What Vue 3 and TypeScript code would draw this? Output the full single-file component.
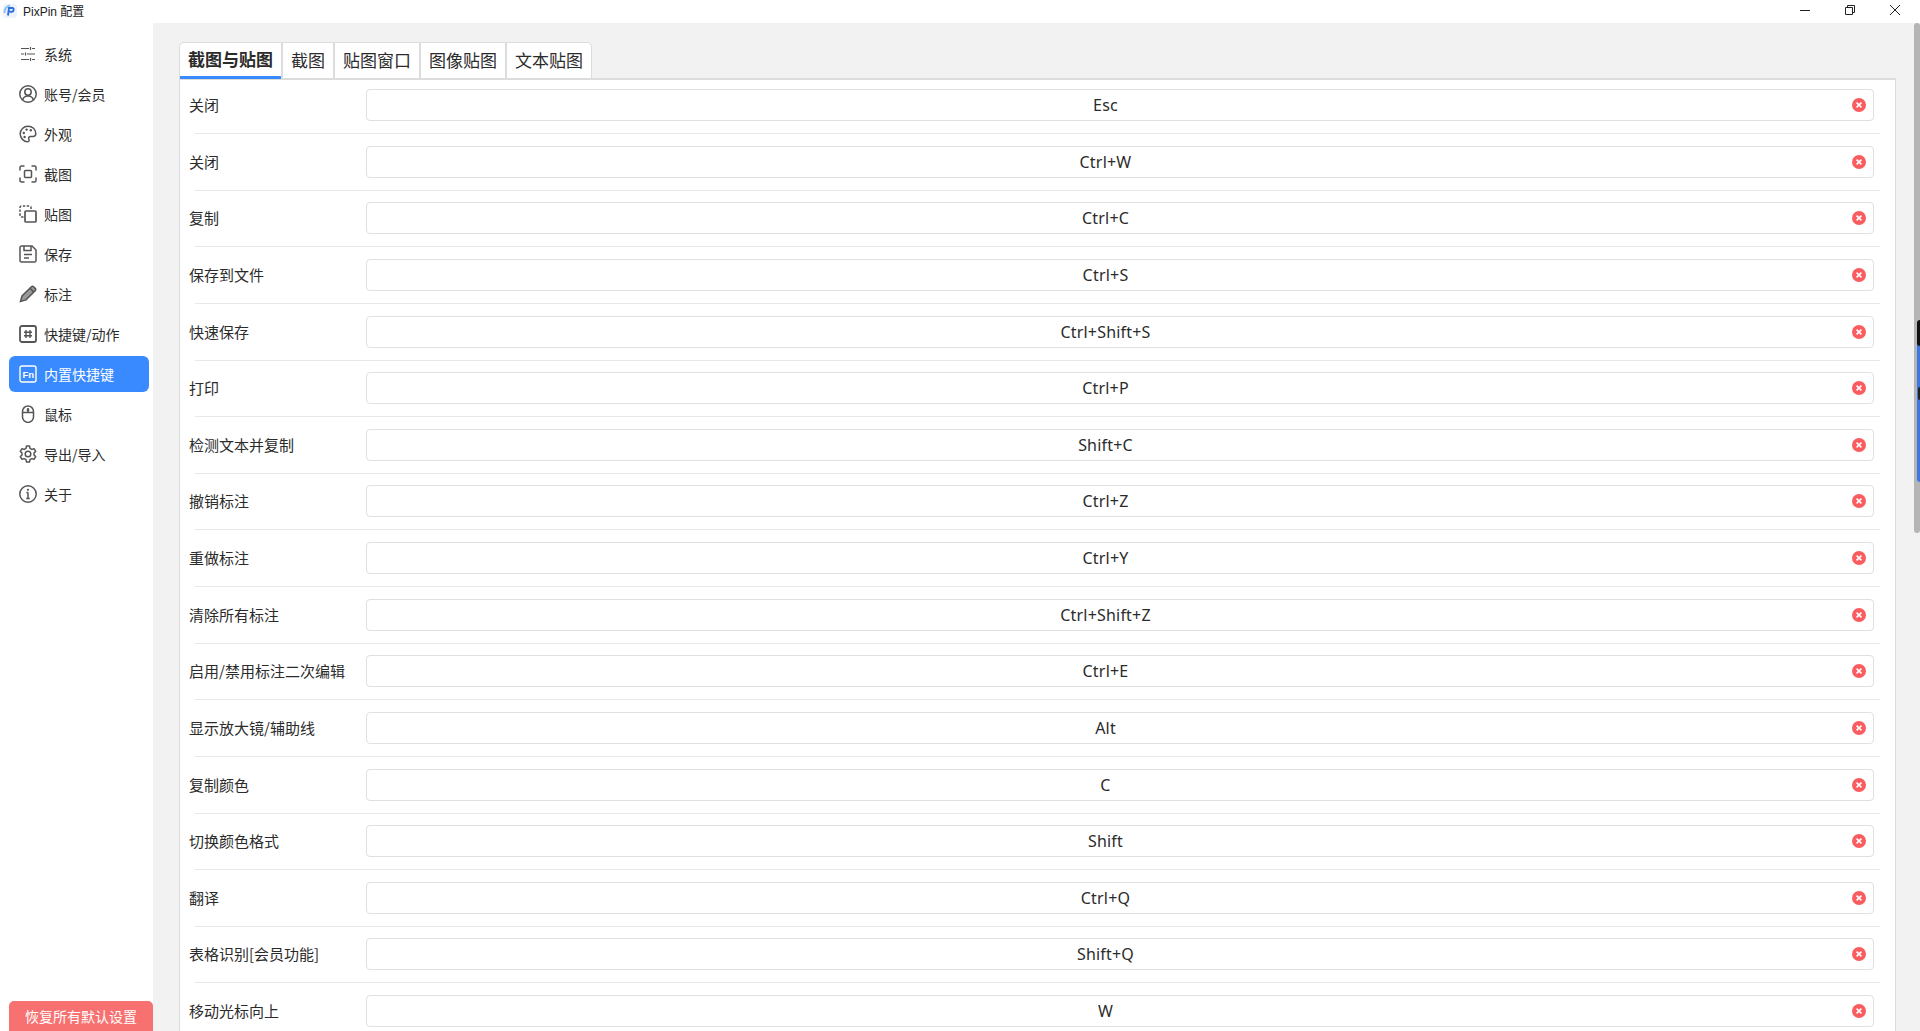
<script setup lang="ts">
interface NavItem { label: string; icon: string; active?: boolean }
const nav: NavItem[] = [
  { label: '系统', icon: 'sliders' },
  { label: '账号/会员', icon: 'user' },
  { label: '外观', icon: 'palette' },
  { label: '截图', icon: 'shot' },
  { label: '贴图', icon: 'pin' },
  { label: '保存', icon: 'save' },
  { label: '标注', icon: 'pen' },
  { label: '快捷键/动作', icon: 'hash' },
  { label: '内置快捷键', icon: 'fn', active: true },
  { label: '鼠标', icon: 'mouse' },
  { label: '导出/导入', icon: 'gear' },
  { label: '关于', icon: 'info' },
]
const tabs = ['截图与贴图', '截图', '贴图窗口', '图像贴图', '文本贴图']
const rows: [string, string][] = [
  ['关闭', 'Esc'],
  ['关闭', 'Ctrl+W'],
  ['复制', 'Ctrl+C'],
  ['保存到文件', 'Ctrl+S'],
  ['快速保存', 'Ctrl+Shift+S'],
  ['打印', 'Ctrl+P'],
  ['检测文本并复制', 'Shift+C'],
  ['撤销标注', 'Ctrl+Z'],
  ['重做标注', 'Ctrl+Y'],
  ['清除所有标注', 'Ctrl+Shift+Z'],
  ['启用/禁用标注二次编辑', 'Ctrl+E'],
  ['显示放大镜/辅助线', 'Alt'],
  ['复制颜色', 'C'],
  ['切换颜色格式', 'Shift'],
  ['翻译', 'Ctrl+Q'],
  ['表格识别[会员功能]', 'Shift+Q'],
  ['移动光标向上', 'W'],
]
</script>

<template>
  <div class="win">
    <header class="titlebar">
      <div class="title-left">
        <svg class="logo" width="16" height="16" viewBox="0 0 16 16">
          <rect x="1" y="1" width="14" height="14" rx="3" fill="#eef3fb" />
          <path d="M2.5 10 A7 7 0 0 1 8 2.5" fill="none" stroke="#8fc0f5" stroke-width="2" />
          <path d="M6 12.5L7 5H10.5C12 5 12.3 8.6 10 8.8H7.6" fill="none" stroke="#2a6fe0" stroke-width="1.9" />
        </svg>
        <span class="title-text">PixPin 配置</span>
      </div>
      <div class="win-controls">
        <svg width="12" height="12" viewBox="0 0 12 12"><path d="M1 6.5H11" stroke="#222" fill="none" /></svg>
        <svg width="12" height="12" viewBox="0 0 12 12"><path d="M1.5 3.5H8.5V10.5H1.5ZM3.5 3.5V1.5H10.5V8.5H8.5" stroke="#222" fill="none" /></svg>
        <svg width="12" height="12" viewBox="0 0 12 12"><path d="M1 1L11 11M11 1L1 11" stroke="#222" fill="none" /></svg>
      </div>
    </header>
    <div class="body">
      <aside class="side">
        <nav class="nav">
          <div v-for="n in nav" :key="n.label" class="nav-item" :class="{ active: n.active }">
            <svg class="nav-icon" width="18" height="18" viewBox="0 0 18 18" fill="none" stroke="currentColor" stroke-width="1.5">
              <template v-if="n.icon === 'sliders'">
                <path stroke-width="1.2" d="M2 3.5H10M13 3.5H16M2 9H5M8 9H16M2 14.5H10M13 14.5H16M11.5 2V5M6.5 7.5V10.5M11.5 13V16" />
              </template>
              <template v-else-if="n.icon === 'user'">
                <circle cx="9" cy="9" r="8.2" />
                <circle cx="9" cy="7" r="3.2" />
                <path d="M3.6 15C4.4 12 6.6 11 9 11S13.6 12 14.4 15" />
              </template>
              <template v-else-if="n.icon === 'palette'">
                <path d="M9 1.2C4.6 1.2 1.2 4.6 1.2 8.8S4.6 16.8 8.6 16.8C10.4 16.8 10.4 15.2 9.8 14.2 9.2 13 10 11.6 11.4 11.6H14C15.8 11.6 16.8 10.4 16.8 8.6 16.8 4.4 13.4 1.2 9 1.2Z" />
                <circle cx="4.8" cy="8" r="1.2" fill="currentColor" stroke="none" />
                <circle cx="7.6" cy="4.6" r="1.2" fill="currentColor" stroke="none" />
                <circle cx="11.8" cy="5.2" r="1.2" fill="currentColor" stroke="none" />
                <circle cx="5.6" cy="12" r="1.2" fill="currentColor" stroke="none" />
              </template>
              <template v-else-if="n.icon === 'shot'">
                <path d="M1 5.5V2.5C1 1.6 1.6 1 2.5 1H5.5M12.5 1H15.5C16.4 1 17 1.6 17 2.5V5.5M17 12.5V15.5C17 16.4 16.4 17 15.5 17H12.5M5.5 17H2.5C1.6 17 1 16.4 1 15.5V12.5" />
                <rect x="5.5" y="5.5" width="7" height="7" rx="1" />
              </template>
              <template v-else-if="n.icon === 'pin'">
                <path d="M4.5 12H2.5C1.6 12 1 11.4 1 10.5V2.5C1 1.6 1.6 1 2.5 1H10.5C11.4 1 12 1.6 12 2.5V4.5" stroke-dasharray="2.4 1.5" />
                <rect x="6" y="6" width="11" height="11" rx="1" stroke-width="1.7" />
              </template>
              <template v-else-if="n.icon === 'save'">
                <path d="M2.5 1H13L17 5V15.5C17 16.4 16.4 17 15.5 17H2.5C1.6 17 1 16.4 1 15.5V2.5C1 1.6 1.6 1 2.5 1Z" />
                <path d="M5 1V5.5H12V1M5 9.5H13M5 13H10" />
              </template>
              <template v-else-if="n.icon === 'pen'">
                <path d="M1.5 16.5L3 11 12.4 1.8C13 1.2 14 1.2 14.6 1.8L16.2 3.4C16.8 4 16.8 5 16.2 5.6L7 14.9Z" fill="currentColor" fill-opacity=".6" />
                <path d="M11 3.3L14.7 7" />
              </template>
              <template v-else-if="n.icon === 'hash'">
                <rect x="1" y="1" width="16" height="16" rx="2" stroke-width="1.8" />
                <path stroke-width="1.4" d="M7 5V13M11 5V13M5 7.3H13M5 10.7H13" />
              </template>
              <template v-else-if="n.icon === 'fn'">
                <rect x="1" y="1" width="16" height="16" rx="2" stroke-width="1.4" />
                <text x="3.4" y="12.6" font-size="9.5" font-weight="700" fill="currentColor" stroke="none" font-family="Liberation Sans">Fn</text>
              </template>
              <template v-else-if="n.icon === 'mouse'">
                <rect x="3.5" y="1" width="11" height="16.4" rx="5.5" />
                <path d="M3.5 7.5H14.5" />
                <rect x="7.8" y="3" width="2.4" height="4" rx="1.2" fill="currentColor" stroke="none" />
              </template>
              <template v-else-if="n.icon === 'gear'">
                <path d="M7.5 1H10.5L11 3.4 12.8 4.4 15 3.7 16.7 6.4 15 8 15 10 16.7 11.6 15 14.3 12.8 13.6 11 14.6 10.5 17H7.5L7 14.6 5.2 13.6 3 14.3 1.3 11.6 3 10 3 8 1.3 6.4 3 3.7 5.2 4.4 7 3.4Z" stroke-linejoin="round" />
                <circle cx="9" cy="9" r="2.8" />
              </template>
              <template v-else>
                <circle cx="9" cy="9" r="8.2" />
                <path d="M9 7.5V13.5M7.2 13.5H10.8M7.4 7.5H9" />
                <circle cx="9" cy="4.8" r="1.1" fill="currentColor" stroke="none" />
              </template>
            </svg>
            <span>{{ n.label }}</span>
          </div>
        </nav>
        <button class="reset">恢复所有默认设置</button>
      </aside>
      <main class="main">
        <div class="tabs">
          <div v-for="(t, i) in tabs" :key="t" class="tab" :class="{ on: i === 0 }">{{ t }}</div>
        </div>
        <section class="panel">
          <div v-for="(r, i) in rows" :key="i" class="row">
            <label class="row-label">{{ r[0] }}</label>
            <div class="key-input">
              <span>{{ r[1] }}</span>
              <svg class="clear" width="14" height="14" viewBox="0 0 14 14">
                <circle cx="7" cy="7" r="7" fill="#fa5c60" />
                <path d="M4.6 4.6L9.4 9.4M9.4 4.6L4.6 9.4" stroke="#fff" stroke-width="1.6" />
              </svg>
            </div>
          </div>
        </section>
      </main>
    </div>
    <div class="scrollbar">
      <div class="mark-blue"></div>
      <div class="mark-black"></div>
      <div class="mark-dot"></div>
    </div>
  </div>
</template>

<style>
html, body { margin: 0; height: 100%; overflow: hidden; background: #fff; }
</style>

<style scoped>
.win {
  position: relative;
  width: 1920px;
  height: 1031px;
  overflow: hidden;
  display: flex;
  flex-direction: column;
  font-family: "Noto Sans CJK SC", "Liberation Sans", sans-serif;
  color: #2b2b2b;
  background: #fff;
}
.titlebar {
  height: 23px;
  flex: none;
  display: flex;
  align-items: flex-start;
  justify-content: space-between;
  background: #fff;
}
.title-left { display: flex; align-items: center; gap: 5px; padding-left: 2px; height: 21px; }
.title-text { font-family: "Liberation Sans", "Noto Sans CJK SC", sans-serif; font-size: 12px; color: #222; }
.win-controls { display: flex; gap: 33px; padding: 4px 19px 0 0; }
.win-controls svg { display: block; }
.body { flex: 1; display: flex; min-height: 0; }
.side {
  width: 153px;
  flex: none;
  display: flex;
  flex-direction: column;
  justify-content: space-between;
  background: #fff;
}
.nav { display: flex; flex-direction: column; padding: 13px 0 0 9px; gap: 4px; }
.nav-item {
  width: 140px;
  height: 36px;
  border-radius: 6px;
  display: flex;
  align-items: center;
  gap: 7px;
  padding-left: 10px;
  box-sizing: border-box;
  font-size: 14px;
  color: #2b2b2b;
}
.nav-icon { color: #555; flex: none; }
.nav-item.active { background: #3a8aff; color: #fff; }
.nav-item.active .nav-icon { color: #fff; }
.reset {
  width: 144px;
  height: 30px;
  margin: 0 0 0 9px;
  border: 0;
  border-radius: 5px 5px 0 0;
  background: #f87171;
  color: #fff;
  font: inherit;
  font-size: 14px;
  padding: 0;
}
.main {
  flex: 1;
  min-width: 0;
  background: #f2f2f2;
  padding: 19px 24px 0 26px;
}
.tabs {
  display: flex;
  width: fit-content;
  height: 36px;
  box-sizing: border-box;
  gap: 2px;
  padding: 1px 1px 0 1px;
  background: #dcdcdc;
  border-radius: 5px 5px 0 0;
}
.tab {
  padding: 0 8px 2px;
  height: 35px;
  box-sizing: border-box;
  display: flex;
  align-items: center;
  font-size: 17px;
  background: #fff;
  color: #2b2b2b;
}
.tab:first-child { border-top-left-radius: 4px; }
.tab:last-child { border-top-right-radius: 4px; }
.tab.on {
  position: relative;
  font-weight: 700;
  height: 36px;
  padding-bottom: 3px;
  border-bottom: 3px solid #3a8aff;
}
.panel {
  background: #fff;
  border: 1px solid #dcdcdc;
  border-top: 2px solid #dcdcdc;
  padding: 0 21px 0 9px;
}
.row {
  display: flex;
  align-items: flex-start;
  height: 56.63px;
  box-sizing: border-box;
  padding-top: 9px;
  position: relative;
}
.row::after {
  content: "";
  position: absolute;
  left: 6px;
  right: -6px;
  bottom: 2.63px;
  height: 1px;
  background: #e8e8e8;
}
.row-label { width: 177px; flex: none; font-size: 15px; line-height: 32px; color: #2b2b2b; }
.key-input {
  flex: 1;
  height: 32px;
  box-sizing: border-box;
  padding-right: 29px;
  border: 1px solid #e0e0e0;
  border-radius: 4px;
  display: flex;
  align-items: center;
  justify-content: center;
  position: relative;
  font-family: "Noto Sans", "Noto Sans CJK SC", sans-serif;
  font-size: 16px;
  letter-spacing: 0.2px;
  color: #2b2b2b;
  background: #fff;
}
.clear { position: absolute; right: 7px; top: 8px; }
.scrollbar {
  position: absolute;
  right: 0;
  top: 23px;
  width: 6px;
  height: 510px;
  background: #b5b5b5;
  border-radius: 3px;
}
.mark-blue {
  position: absolute;
  right: 0;
  top: 317px;
  width: 3px;
  height: 142px;
  background: #3c78e0;
  border-radius: 3px 0 0 3px;
}
.mark-black {
  position: absolute;
  right: 0;
  top: 297px;
  width: 3px;
  height: 26px;
  background: #111;
  border-radius: 3px 0 0 3px;
}
.mark-dot {
  position: absolute;
  right: 0;
  top: 364px;
  width: 2px;
  height: 13px;
  background: #222;
  border-radius: 2px 0 0 2px;
}
</style>
